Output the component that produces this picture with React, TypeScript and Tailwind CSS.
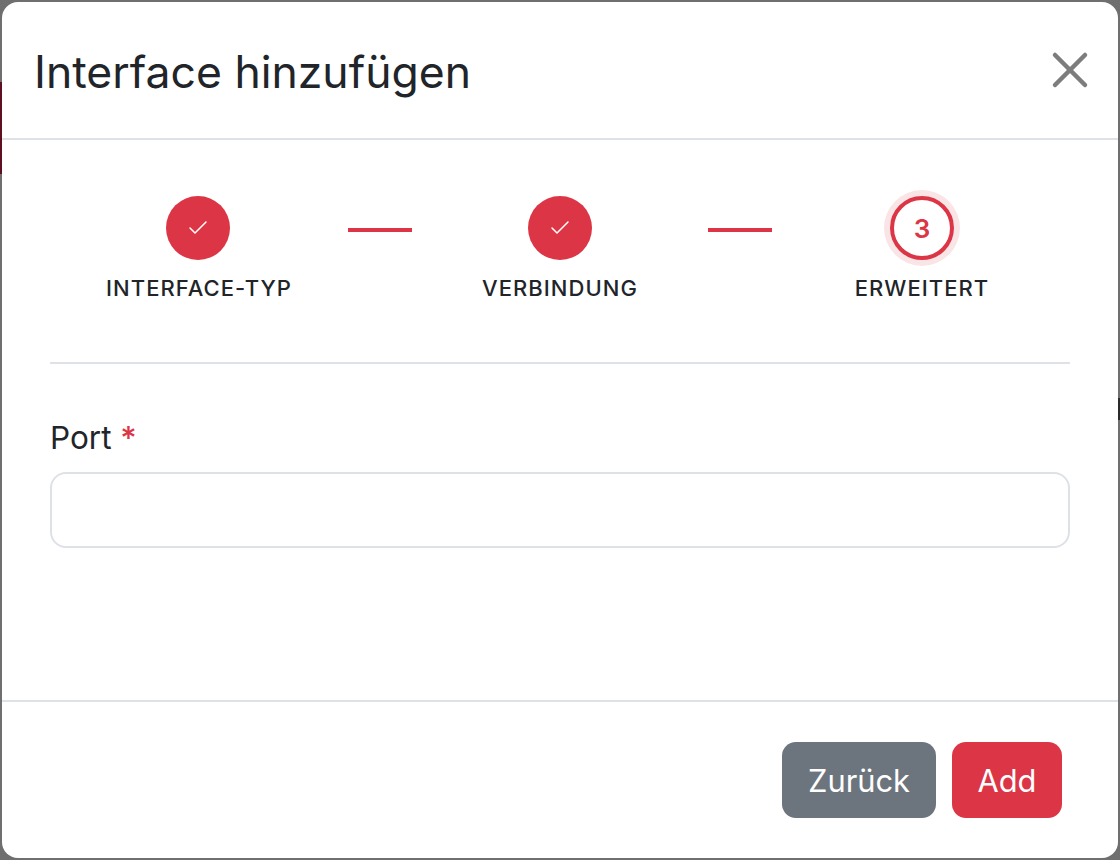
import { Check, X } from "lucide-react";

const red = "bg-[#dc3545]";

function StepLabel({ text, className }: { text: string; className?: string }) {
  return <span className={`mt-[14px] text-[22px] leading-[28px] font-[550] tracking-[1.05px] text-[#212529] ${className ?? ""}`}>{text}</span>;
}

function DoneStep({ label, className, labelClass }: { label: string; className?: string; labelClass?: string }) {
  return (
    <div className={`flex flex-col items-center ${className ?? ""}`}>
      <div className={`grid size-16 place-items-center rounded-full ${red} text-white`}>
        <Check size={24} strokeWidth={1.5} />
      </div>
      <StepLabel text={label} className={labelClass} />
    </div>
  );
}

function Connector() {
  return <div className={`mt-8 h-1 w-16 ${red}`} />;
}

export default function App() {
  return (
    <div className="relative h-[860px] w-[1120px] overflow-hidden bg-[#6f6f6f] p-[2px] font-['Inter',sans-serif]">
      <div className="absolute top-[82px] left-0 h-[92px] w-[2px] bg-[#5e1020]" />
      <div className="absolute top-[398px] right-0 h-[22px] w-[2px] bg-[#2b2b2b]" />
      <div className="relative flex h-full flex-col rounded-[16px] bg-white">
        <header className="flex h-[138px] shrink-0 items-center justify-between border-b-2 border-[#dee2e6] pr-[18px] pl-[32px]">
          <h1 className="pt-1 text-[44.5px] leading-[54px] font-normal text-[#212529]">Interface hinzufügen</h1>
          <X size={60} strokeWidth={1.8} className="text-[#7d7d7d]" />
        </header>

        <main className="flex-1 px-12 pt-14">
          <div className="grid grid-cols-[298px_64px_296px_64px_298px] border-b-2 border-[#dee2e6] pb-[60px]">
            <DoneStep label="INTERFACE-TYP" className="pr-[2px]" labelClass="pl-[2px]" />
            <Connector />
            <DoneStep label="VERBINDUNG" />
            <Connector />
            <div className="flex flex-col items-center pl-[2px]">
              <div className="grid size-16 place-items-center rounded-full border-[4px] border-[#dc3545] text-[26px] font-semibold text-[#dc3545] shadow-[0_0_0_6px_#f9e4e6]">3</div>
              <StepLabel text="ERWEITERT" />
            </div>
          </div>
          <label className="mt-[55px] block text-[31.5px] leading-[38px] text-[#212529]">
            Port <span className="font-medium text-[#dc3545]">*</span>
          </label>
          <input className="mt-[15px] block h-[76px] w-full rounded-[16px] border-2 border-[#dee2e6] bg-white" />
        </main>

        <footer className="flex h-[158px] shrink-0 items-start justify-end gap-4 border-t-2 border-[#dee2e6] pt-10 pr-14">
          <button className="h-[76px] w-[154px] rounded-[14px] bg-[#6c757d] pt-[2px] text-[30.8px] text-white">Zurück</button>
          <button className={`h-[76px] w-[110px] rounded-[14px] ${red} pt-[2px] text-[30.8px] text-white`}>Add</button>
        </footer>
      </div>
    </div>
  );
}
